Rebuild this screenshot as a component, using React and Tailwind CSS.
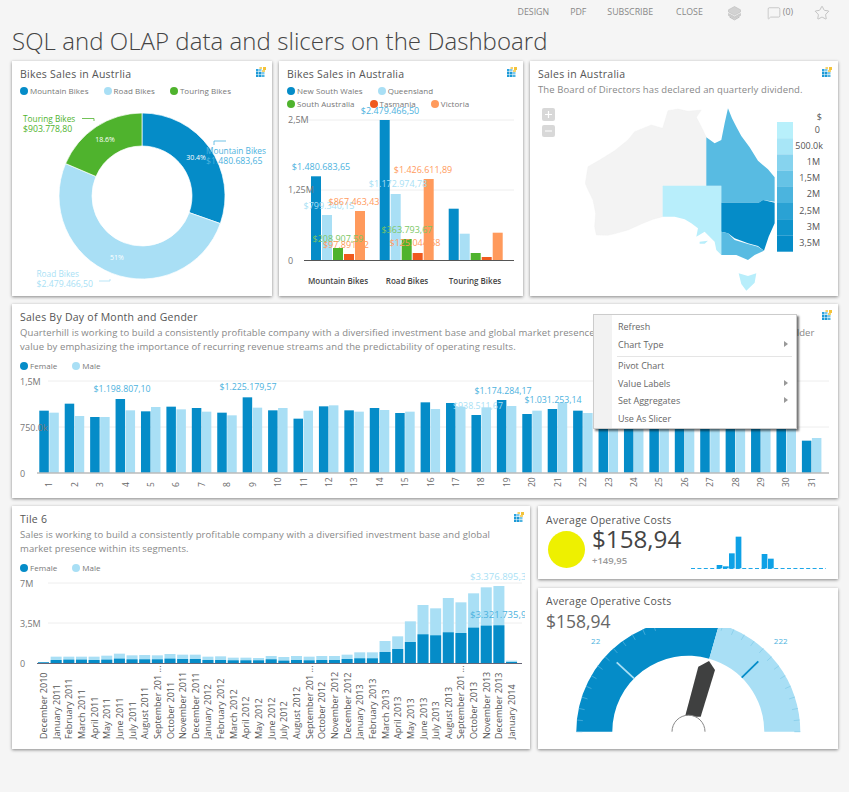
import React from "react";
import { Star, MessageSquare } from "lucide-react";

const BLUE = "#058cc8";
const LIGHT = "#a9dff5";
const GREEN = "#4fb32d";
const RED = "#ef5a1e";
const ORANGE = "#ff9a5c";
const LABEL = "#4cb2de";

const TileIcon = () => (
  <svg className="absolute right-[6px] top-[6px]" width="10" height="10" viewBox="0 0 10 10">
    <rect x="0" y="2" width="2.500" height="2.500" fill="#2ba3e0" />
    <rect x="3" y="2" width="2.500" height="2.500" fill="#7cc8ea" />
    <rect x="3.500" y="0" width="2.500" height="2" fill="#f6d26a" />
    <rect x="7" y="0" width="3" height="3" fill="#f3c33a" />
    <rect x="6" y="3" width="3" height="2" fill="#f6d26a" />
    <rect x="0" y="5" width="2.500" height="2.500" fill="#1d9ad6" />
    <rect x="3" y="5" width="2.500" height="2.500" fill="#1d9ad6" />
    <rect x="6" y="5" width="2.500" height="2.500" fill="#7cc8ea" />
    <rect x="0" y="8" width="2.500" height="2" fill="#1d9ad6" />
    <rect x="3" y="8" width="2.500" height="2" fill="#1d9ad6" />
    <rect x="6" y="8" width="2.500" height="2" fill="#4fb3e0" />
  </svg>
);

const LayersIcon = () => (
  <svg width="13" height="15" viewBox="0 0 13 15" className="ml-[4px]">
    <path d="M6.500 0.500L12.500 3.800V6L6.500 9.300L0.500 6V3.800Z" fill="#d2d2d2" stroke="#bdbdbd" strokeWidth="0.600" />
    <path d="M0.500 7.500L6.500 10.800L12.500 7.500V9.500L6.500 12.800L0.500 9.500Z" fill="#cfcfcf" stroke="#bdbdbd" strokeWidth="0.600" />
    <path d="M1.500 11L6.500 13.800L11.500 11" fill="none" stroke="#bdbdbd" strokeWidth="1" />
  </svg>
);

const Card = ({ className, children, icon = true }) => (
  <div className={`relative bg-white shadow-[0_1px_3px_rgba(0,0,0,0.45)] ${className}`}>
    {icon && <TileIcon />}
    {children}
  </div>
);

const Title = ({ children, className = "h-[22px]" }) => (
  <div className={`leading-[26px] text-[10.500px] tracking-[0.25px] text-[#555] px-2 whitespace-nowrap ${className}`}>{children}</div>
);

const Desc = ({ children, className = "leading-[13.500px]" }) => (
  <div className={`px-2 text-[9.500px] tracking-[0.1px] text-[#888] whitespace-nowrap ${className}`}>{children}</div>
);

const Legend = ({ items, className = "" }) => (
  <div className={`flex items-center gap-[15px] px-2 text-[8px] tracking-[0.05px] text-[#777] whitespace-nowrap ${className}`}>
    {items.map(([name, color]) => (
      <div key={name} className="flex items-center gap-[2px]">
        <span className="w-2 h-2 rounded-full" style={{ background: color }} />
        {name}
      </div>
    ))}
  </div>
);

const polar = (cx, cy, r, deg) => {
  const a = ((deg - 90) * Math.PI) / 180;
  return [cx + r * Math.cos(a), cy + r * Math.sin(a)];
};

const arc = (cx, cy, ro, ri, a1, a2) => {
  const [x1, y1] = polar(cx, cy, ro, a1);
  const [x2, y2] = polar(cx, cy, ro, a2);
  const [x3, y3] = polar(cx, cy, ri, a2);
  const [x4, y4] = polar(cx, cy, ri, a1);
  const large = a2 - a1 > 180 ? 1 : 0;
  return `M${x1} ${y1}A${ro} ${ro} 0 ${large} 1 ${x2} ${y2}L${x3} ${y3}A${ri} ${ri} 0 ${large} 0 ${x4} ${y4}Z`;
};

const Donut = () => (
  <svg className="block overflow-visible" width="260" height="197" viewBox="12 99 260 197">
    <path d={arc(142, 196, 83, 50, 0, 109.4)} fill={BLUE} stroke="#fff" strokeWidth="0.7" />
    <path d={arc(142, 196, 83, 50, 109.4, 293)} fill={LIGHT} stroke="#fff" strokeWidth="0.7" />
    <path d={arc(142, 196, 83, 50, 293, 360)} fill={GREEN} stroke="#fff" strokeWidth="0.7" />
    <text x="105" y="142" fontSize="7" fill="#fff" textAnchor="middle">18.6%</text>
    <text x="196" y="159.500" fontSize="7" fill="#fff" textAnchor="middle">30.4%</text>
    <text x="117" y="260" fontSize="7" fill="#fff" textAnchor="middle">51%</text>
    <path d="M82 118.500H94V121" fill="none" stroke={GREEN} strokeWidth="0.8" />
    <path d="M214 145V141H226" fill="none" stroke={LABEL} strokeWidth="0.8" />
    <path d="M99 281H110V279" fill="none" stroke={LIGHT} strokeWidth="0.8" />
    <text x="23" y="122" fontSize="8.300" fill={GREEN}>Touring Bikes</text>
    <text x="23" y="131.500" fontSize="8.700" fill={GREEN}>$903.778,80</text>
    <text x="206" y="154" fontSize="8.300" fill={LABEL}>Mountain Bikes</text>
    <text x="206" y="164" fontSize="8.700" fill={LABEL}>$1.480.683,65</text>
    <text x="36.500" y="277" fontSize="8.300" fill={LIGHT}>Road Bikes</text>
    <text x="36.500" y="287" fontSize="8.700" fill={LIGHT}>$2.479.466,50</text>
  </svg>
);

const groups = [
  { x: 311, tops: [176.3, 215, 248, 254, 211] },
  { x: 379.7, tops: [120, 194, 239, 253, 179] },
  { x: 448.7, tops: [208.7, 233.7, 253, 257, 232.7] },
];
const stateColors = [BLUE, LIGHT, GREEN, RED, ORANGE];
const stateLabels = [
  ["$1.480.683,65", 321, 170, LABEL],
  ["$2.479.466,50", 390, 114, LABEL],
  ["$799.340,15", 329, 209, LIGHT],
  ["$867.463,43", 354, 205, ORANGE],
  ["$208.907,59", 338, 242, "#7cc765"],
  ["$97.891,42", 346, 248, ORANGE],
  ["$1.172.974,78", 398, 187, LIGHT],
  ["$1.426.611,89", 423, 173, ORANGE],
  ["$363.793,67", 407, 233, "#7cc765"],
  ["$125.044,68", 415, 246, ORANGE],
];

const StateBars = () => (
  <svg className="block overflow-visible" width="244" height="186" viewBox="279 110 244 186">
    <line x1="304" x2="514" y1="120" y2="120" stroke="#eee" />
    <line x1="304" x2="514" y1="190" y2="190" stroke="#eee" />
    {groups.map((g) =>
      g.tops.map((top, i) => (
        <rect key={g.x + "-" + i} x={g.x + i * 11} y={top} width="10" height={260 - top} fill={stateColors[i]} />
      ))
    )}
    <line x1="304" x2="514" y1="260.500" y2="260.500" stroke="#555" />
    <text x="288" y="123" fontSize="9" fill="#777">2,5M</text>
    <text x="288" y="193" fontSize="9" fill="#777">1,25M</text>
    <text x="288" y="264" fontSize="9" fill="#777">0</text>
    {stateLabels.map(([t, x, y, c]) => (
      <text key={t} x={x} y={y} fontSize="9" fill={c} textAnchor="middle">{t}</text>
    ))}
    <text x="338" y="284" fontSize="8" fontWeight="600" fill="#444" textAnchor="middle">Mountain Bikes</text>
    <text x="407" y="284" fontSize="8" fontWeight="600" fill="#444" textAnchor="middle">Road Bikes</text>
    <text x="475" y="284" fontSize="8" fontWeight="600" fill="#444" textAnchor="middle">Touring Bikes</text>
  </svg>
);

// map outlines are traced in zoomed crop coordinates, scaled down with a group transform
const scale = ["#b8f0fb", "#a8e6f7", "#86d3ee", "#66c3e6", "#4bb4de", "#2aa2d4", "#0f94cc", "#058cc8"];
const scaleLabels = ["0", "500.0k", "1M", "1,5M", "2M", "2,5M", "3M", "3,5M"];

const AusMap = () => (
  <svg className="block overflow-visible" width="308" height="199" viewBox="530 97 308 199">
    <g transform="translate(528 60) scale(0.3333)">
      <path
        d="M420 152L450 147L480 154L520 150L505 172L520 200L535 232V377H404V470L375 478L345 490L300 510L265 520L240 526L205 525L200 500L203 460L195 420L178 385L172 370L180 320L215 300L260 272L300 240L320 215L370 195L404 205Z"
        fill="#f3f3f3"
        stroke="#ececec"
      />
      <path
        d="M404 377H580V585L565 570L560 545L530 515L505 530L510 505L490 490L470 478L440 470L404 470Z"
        fill="#b8eefb"
      />
      <path d="M515 545L540 542L530 551L515 551Z" fill="#b8eefb" />
      <path
        d="M535 232L560 250L580 240L590 190L600 145L612 175L625 200L640 228L665 262L690 302L720 328L740 352V425L705 420L692 428H580V377H535Z"
        fill="#58bbe2"
      />
      <path
        d="M580 428H692L705 420L740 428V490L722 530L708 572L690 558L660 550L620 535L600 520L580 515Z"
        fill={BLUE}
      />
      <path
        d="M580 515L600 520L620 540L660 552L690 560L708 572L680 585L660 600L625 585L580 585Z"
        fill="#58bbe2"
      />
      <path d="M632 640L660 648L685 640L680 668L655 692L640 672Z" fill="#b8eefb" />
    </g>
    <rect x="542" y="108" width="13" height="13" rx="2" fill="#d8d8d8" />
    <rect x="542" y="125" width="13" height="12" rx="2" fill="#d8d8d8" />
    <path d="M545 114.500H552M548.500 111V118M545 131H552" stroke="#fff" strokeWidth="1.200" />
    {scale.map((c, i) => (
      <rect key={c} x="777" y={122 + i * 16.2} width="16" height="16.300" fill={c} />
    ))}
    <text x="822" y="120" fontSize="9" fill="#555" textAnchor="end">$</text>
    {scaleLabels.map((t, i) => (
      <text key={t} x={t === "500.0k" ? 823 : 820} y={133 + i * 16.1} fontSize="9" fill="#555" textAnchor="end">{t}</text>
    ))}
  </svg>
);

const dayTops = [
  [332, 338], [311, 348], [351, 351], [297, 331], [334, 321], [320, 328], [324, 335], [338, 346],
  [292, 323], [331, 324], [356, 332], [319, 316], [331, 335], [324, 330], [339, 335], [307, 327],
  [309, 320], [345, 322], [300, 318], [342, 332], [327, 308], [332, 339], [350, 350], [350, 350],
  [350, 350], [350, 350], [350, 350], [350, 350], [350, 350], [350, 350], [422, 414],
];

const DayChart = () => (
  <svg className="block overflow-visible" width="826" height="125" viewBox="12 373 826 125">
    <line x1="48" x2="829" y1="381" y2="381" stroke="#eee" />
    <line x1="48" x2="829" y1="427" y2="427" stroke="#eee" />
    {dayTops.map(([f, m], i) => {
      const x = 39.300 + i * 25.420;
      const fy = 300 + f / 3;
      const my = 300 + m / 3;
      return (
        <g key={i}>
          <rect x={x} y={fy} width="9.500" height={472.500 - fy} fill={BLUE} />
          <rect x={x + 10} y={my} width="9.500" height={472.500 - my} fill={LIGHT} />
          <text transform={`translate(${x + 13} 487) rotate(-90)`} fontSize="8.500" fill="#666">{i + 1}</text>
        </g>
      );
    })}
    <line x1="37" x2="829" y1="473" y2="473" stroke="#999" />
    <text x="20" y="385" fontSize="9" fill="#777">1,5M</text>
    <text x="20" y="431" fontSize="9" fill="#777">750.0k</text>
    <text x="20" y="477" fontSize="9" fill="#777">0</text>
    {[
      ["$1.198.807,10", 122, 392, LABEL],
      ["$1.225.179,57", 248, 390, LABEL],
      ["$1.174.284,17", 503, 394, LABEL],
      ["$938.511,67", 478, 409, LIGHT],
      ["$1.031.253,14", 553, 403, LABEL],
    ].map(([t, x, y, c]) => (
      <text key={t} x={x} y={y} fontSize="8.800" fill={c} textAnchor="middle">{t}</text>
    ))}
  </svg>
);

const months = [
  "December 2010", "January 2011", "February 2011", "March 2011", "April 2011", "May 2011", "June 2011", "July 2011",
  "August 2011", "September 201 ...", "October 2011", "November 2011", "December 2011", "January 2012", "February 2012",
  "March 2012", "April 2012", "May 2012", "June 2012", "July 2012", "August 2012", "September 201 ...", "October 2012",
  "November 2012", "December 2012", "January 2013", "February 2013", "March 2013", "April 2013", "May 2013", "June 2013",
  "July 2013", "August 2013", "September 201 ...", "October 2013", "November 2013", "December 2013", "January 2014",
];

const monthTops = [
  [486, 487], [470, 480], [470, 479], [470, 479], [470, 480], [467, 479], [461, 476], [466, 478], [465, 478], [466, 478],
  [462, 476], [464, 477], [464, 477], [470, 480], [469, 480], [473, 481], [473, 481], [474, 481], [468, 478], [471, 482],
  [468, 480], [470, 481], [468, 480], [468, 480], [464, 477], [457, 475], [457, 475], [423, 456], [409, 447], [364, 426],
  [315, 403], [325, 406], [294, 397], [307, 399], [280, 383], [262, 377], [258, 376], [482, 486],
];

const MonthChart = () => (
  <svg className="block overflow-visible" width="518" height="174" viewBox="12 575 518 174">
    <line x1="48" x2="522" y1="583" y2="583" stroke="#eee" />
    <line x1="48" x2="522" y1="623" y2="623" stroke="#eee" />
    {monthTops.map(([m, f], i) => {
      const x = 38 + i * 12.650;
      const my = 500 + m / 3;
      const fy = 500 + f / 3;
      return (
        <g key={i}>
          <rect x={x} y={my} width="11" height={663 - my} fill={LIGHT} />
          <rect x={x} y={fy} width="11" height={663 - fy} fill={BLUE} />
          <text transform={`translate(${x + 9} 739) rotate(-90)`} fontSize="9" fill="#555">{months[i]}</text>
        </g>
      );
    })}
    <line x1="37" x2="522" y1="663.500" y2="663.500" stroke="#667" />
    <text x="20" y="587" fontSize="9" fill="#777">7M</text>
    <text x="20" y="627" fontSize="9" fill="#777">3,5M</text>
    <text x="20" y="667" fontSize="9" fill="#777">0</text>
    <svg x="12" y="560" width="513" height="70" viewBox="12 560 513 70">
      <text x="470" y="580" fontSize="9.500" fill={LIGHT}>$3.376.895,34</text>
      <text x="470" y="618" fontSize="9.500" fill={LABEL}>$3.321.735,99</text>
    </svg>
  </svg>
);

const sparkBars = [
  [548, 195], [567, 199], [585, 160], [605, 110], [683, 162], [702, 176],
];

const Spark = () => (
  <svg className="block" width="135" height="40" viewBox="692 530 135 40">
    <line x1="692" x2="827" y1="568.500" y2="568.500" stroke="#1ea7e8" strokeDasharray="4 2.400" />
    {sparkBars.map(([x, y]) => (
      <rect key={x} x={535 + x / 3} y={500 + y / 3} width="5.700" height={(205 - y) / 3} fill="#0ea1e6" />
    ))}
  </svg>
);

const ticks = Array.from({ length: 31 }, (_, i) => -90 + i * 6);

const Gauge = () => (
  <svg className="block" width="300" height="121" viewBox="538 628 300 121">
    <path d={arc(688.300, 731.700, 112, 76, -90, 16)} fill={BLUE} />
    <path d={arc(688.300, 731.700, 112, 76, 16, 90)} fill={LIGHT} />
    {ticks.map((a) => {
      const [x1, y1] = polar(688.300, 731.700, 112, a);
      const [x2, y2] = polar(688.300, 731.700, 106, a);
      return <line key={a} x1={x1} y1={y1} x2={x2} y2={y2} stroke={a < 16 ? "#4fb0dc" : "#86cdea"} strokeWidth="0.800" />;
    })}
    <line x1="616.700" y1="662.300" x2="634" y2="678.300" stroke="#a9dff5" strokeWidth="1.800" />
    <line x1="758.300" y1="661.300" x2="741.700" y2="677.700" stroke={BLUE} strokeWidth="1.800" />
    <path d="M709 661L715 670L700.700 716.700H685L698.300 666.700Z" fill="#3f4040" />
    <path d="M672 731.700A16.500 16.500 0 0 1 705 731.700Z" fill="#fff" />
    <path d="M672 731.700A16.500 16.500 0 0 1 705 731.700" fill="none" stroke="#888" />
    <text x="595.700" y="644" fontSize="8" fill={LABEL} textAnchor="middle">22</text>
    <text x="780.700" y="644" fontSize="8" fill={LABEL} textAnchor="middle">222</text>
  </svg>
);

const MenuItem = ({ children, arrow, className = "h-[17.500px]" }) => (
  <div className={`relative flex items-center pl-[24px] ${className}`}>
    {children}
    {arrow && <span className="absolute right-[8px] top-[5px] border-y-[3.5px] border-l-[4px] border-y-transparent border-l-[#999]" />}
  </div>
);

const ContextMenu = () => (
  <div className="absolute left-[593px] top-[314px] w-[204px] h-[115px] bg-white border border-[#ccc] shadow-[2px_2px_2px_rgba(0,0,0,0.55)] text-[9px] text-[#666] whitespace-nowrap">
    <div className="absolute left-0 top-0 bottom-0 w-[18px] bg-[#f2f2f2]" />
    <div className="relative pt-[3px]">
      <MenuItem>Refresh</MenuItem>
      <MenuItem arrow>Chart Type</MenuItem>
      <div className="ml-[23px] mr-[4px] mt-[3px] mb-0 border-t border-[#e5e5e5]" />
      <MenuItem>Pivot Chart</MenuItem>
      <MenuItem arrow>Value Labels</MenuItem>
      <MenuItem arrow>Set Aggregates</MenuItem>
      <MenuItem>Use As Slicer</MenuItem>
    </div>
  </div>
);

const genderLegend = [["Female", BLUE], ["Male", LIGHT]];

export default function App() {
  return (
    <div className="relative w-[849px] h-[792px] bg-[#f5f5f5] font-['Open_Sans',sans-serif] overflow-hidden">
      <div className="h-[26px] flex items-center justify-end gap-[21px] pr-[19px] text-[8.800px] text-[#888]">
        <span>DESIGN</span>
        <span>PDF</span>
        <span>SUBSCRIBE</span>
        <span className="ml-[2px]">CLOSE</span>
        <LayersIcon />
        <span className="flex items-center gap-[2px] ml-[5px]">
          <MessageSquare size={14} strokeWidth={1} className="text-[#aaa]" />
          (0)
        </span>
        <Star size={16} strokeWidth={1} className="text-[#aaa]" />
      </div>
      <h1 className="h-[35px] leading-[29px] px-3 text-[24px] tracking-[0.05px] font-light text-[#444] whitespace-nowrap">
        SQL and OLAP data and slicers on the Dashboard
      </h1>

      <div className="flex flex-col gap-2 px-3">
        <div className="flex gap-[7px]">
          <Card className="w-[260px] h-[235px]">
            <Title>Bikes Sales in Austrlia</Title>
            <Legend items={[["Mountain Bikes", BLUE], ["Road Bikes", LIGHT], ["Touring Bikes", GREEN]]} className="h-4" />
            <Donut />
          </Card>
          <Card className="w-[244px] h-[235px]">
            <Title className="h-6">Bikes Sales in Australia</Title>
            <Legend items={[["New South Wales", BLUE], ["Queensland", LIGHT]]} className="h-3" />
            <Legend items={[["South Australia", GREEN], ["Tasmania", RED], ["Victoria", ORANGE]]} className="h-3 mt-[1px]" />
            <StateBars />
          </Card>
          <Card className="w-[308px] h-[235px]">
            <Title>Sales in Australia</Title>
            <Desc className="h-[14px] leading-[14px]">The Board of Directors has declared an quarterly dividend.</Desc>
            <AusMap />
          </Card>
        </div>

        <Card className="w-[826px] h-[194px]">
          <Title>Sales By Day of Month and Gender</Title>
          <Desc>
            Quarterhill is working to build a consistently profitable company with a diversified investment base and global market presence within its segments. It aims to build shareholder
            <br />
            value by emphasizing the importance of recurring revenue streams and the predictability of operating results.
          </Desc>
          <Legend items={genderLegend} className="h-[14px] mt-[6px]" />
          <DayChart />
        </Card>

        <div className="flex gap-2">
          <Card className="w-[518px] h-[243px]">
            <Title>Tile 6</Title>
            <Desc>
              Sales is working to build a consistently profitable company with a diversified investment base and global
              <br />
              market presence within its segments.
            </Desc>
            <Legend items={genderLegend} className="h-[14px] mt-[6px]" />
            <MonthChart />
          </Card>
          <div className="flex flex-col gap-[9px]">
            <Card className="w-[300px] h-[73px]" icon={false}>
              <Title className="h-6 pt-[1px]">Average Operative Costs</Title>
              <div className="flex pl-[10px]">
                <div className="w-[37px] h-[37px] mt-[1px] rounded-full bg-[#eef000]" />
                <div className="ml-[7px] text-[#444]">
                  <div className="text-[24.200px] leading-[26px] -mt-[4px]">$158,94</div>
                  <div className="text-[9.500px] leading-[14px] mt-[2px] font-semibold text-[#999]">+149,95</div>
                </div>
                <div className="ml-[10px]">
                  <Spark />
                </div>
              </div>
            </Card>
            <Card className="w-[300px] h-[161px]" icon={false}>
              <Title className="h-[26px]">Average Operative Costs</Title>
              <div className="px-2 h-[14px] leading-[14px] text-[17.500px] text-[#666]">$158,94</div>
              <Gauge />
            </Card>
          </div>
        </div>
      </div>
      <ContextMenu />
    </div>
  );
}
